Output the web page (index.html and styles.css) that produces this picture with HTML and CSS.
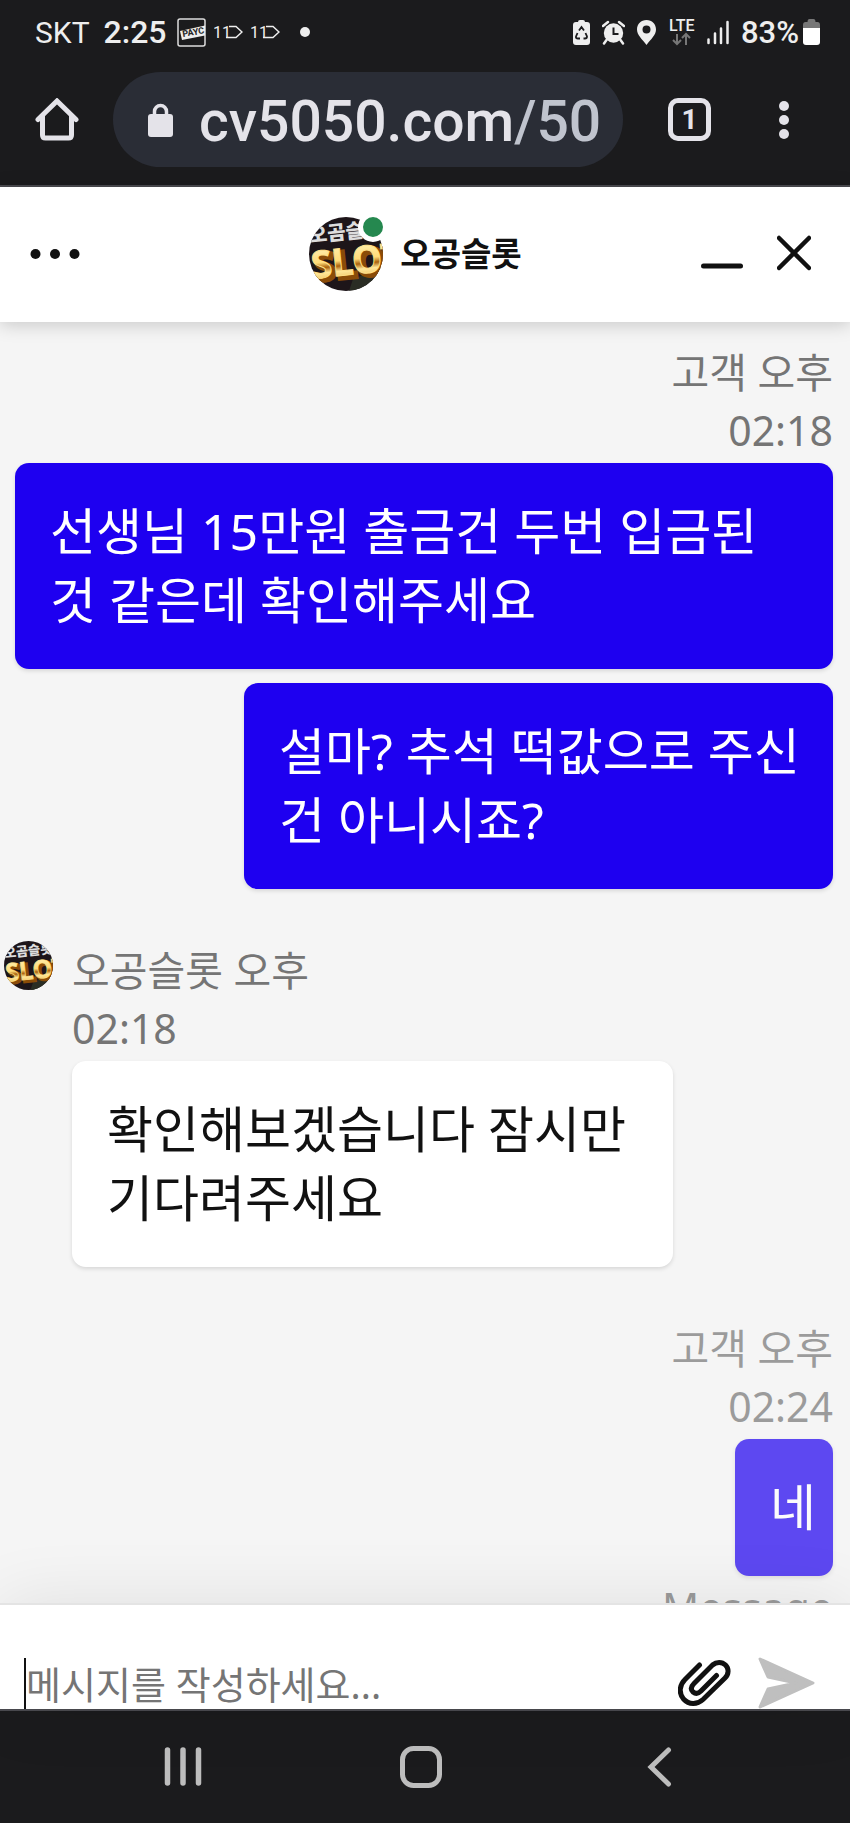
FILE: index.html
```html
<!DOCTYPE html>
<html lang="ko">
<head>
    <meta charset="UTF-8">
    <meta name="viewport" content="width=device-width, initial-scale=1.0">
    <title>오공슬롯</title>
    <link rel="stylesheet" href="styles.css">
</head>
<body>
    <!-- 아바타 로고 (헤더와 메시지에서 같이 사용) -->
    <svg class="defs" aria-hidden="true">
        <defs>
            <linearGradient id="gold" x1="0" y1="0" x2="0" y2="1">
                <stop offset="0.2" stop-color="#fff0b0"/>
                <stop offset="0.5" stop-color="#ffdc78"/>
                <stop offset="0.6" stop-color="#a8600c"/>
                <stop offset="0.7" stop-color="#ffe89a"/>
                <stop offset="1" stop-color="#e0a030"/>
            </linearGradient>
            <clipPath id="round"><circle cx="37" cy="37" r="37"/></clipPath>
            <symbol id="logo" viewBox="0 0 74 74">
                <g clip-path="url(#round)">
                    <rect width="74" height="74" fill="#1d1519"/>
                    <path d="M44 62l30-12v24H40z" fill="#2a2d24"/>
                    <g transform="rotate(-6 37 37)">
                        <text class="logo-top" x="2" y="22">오곰슬롯</text>
                        <text class="logo-shade" x="4" y="61">SLOT</text>
                        <text class="logo-slot" x="1" y="58">SLOT</text>
                    </g>
                </g>
            </symbol>
        </defs>
    </svg>

    <!-- 상태 표시줄 -->
    <div class="status-bar">
        <div class="status-left">
            <span class="carrier">SKT</span>
            <span class="clock">2:25</span>
            <svg width="29" height="29" viewBox="0 0 29 29">
                <rect x="1" y="1" width="27" height="27" rx="2" fill="none" stroke="#ddd" stroke-width="1.5"/>
                <path d="M3 13L28 7.500V17.500L5 22z" fill="#eee"/>
                <text class="payco" x="6" y="19" transform="rotate(-10 6 19)">PAYC</text>
            </svg>
            <svg width="29" height="20" viewBox="0 0 29 20">
                <text class="eleven" x="-1" y="16">11</text>
                <path d="M12 15.500H22L28 10L22 4.500H15" fill="none" stroke="#eee" stroke-width="1.500"/>
            </svg>
            <svg width="29" height="20" viewBox="0 0 29 20">
                <text class="eleven" x="-1" y="16">11</text>
                <path d="M12 15.500H22L28 10L22 4.500H15" fill="none" stroke="#eee" stroke-width="1.500"/>
            </svg>
            <span class="more-dot"></span>
        </div>
        <div class="status-right">
            <svg width="17" height="25" viewBox="0 0 17 25">
                <path d="M5 2q0-2 2-2h3q2 0 2 2h2q3 0 3 3v17q0 3-3 3H3q-3 0-3-3V5q0-3 3-3z" fill="#eee"/>
                <path d="M6 10.500L8.500 7l2.500 3.500M12.500 13l1.500 3.500q0 2-2 2h-1.500M7 18.500H5q-2.500 0-2-2L4.500 13" fill="none" stroke="#1b1b1d" stroke-width="1.800"/>
            </svg>
            <svg width="23" height="25" viewBox="0 0 23 25">
                <circle cx="11.500" cy="13" r="9.700" fill="#eee"/>
                <path d="M1 6l5-4M22 6l-5-4M4.500 20L2 23.500M18.500 20l2.500 3.500" stroke="#eee" stroke-width="2.500" stroke-linecap="round"/>
                <path d="M11.500 7.500V14h5" fill="none" stroke="#1b1b1d" stroke-width="2"/>
            </svg>
            <svg width="19" height="25" viewBox="0 0 19 25">
                <path d="M9.500 0C4 0 0 4 0 9.500C0 15 5 19 9.500 25C14 19 19 15 19 9.500C19 4 15 0 9.500 0zM9.500 5.500a4 4 0 1 1 0 8a4 4 0 1 1 0-8z" fill="#eee" fill-rule="evenodd"/>
            </svg>
            <svg class="lte-icon" width="30" height="28" viewBox="0 0 30 28">
                <text class="lte" x="1" y="13">LTE</text>
                <path d="M9 16v9.500M5 22l4 4l4-4M18 27V16.500M14 20l4-4l4 4" fill="none" stroke="#777" stroke-width="2"/>
            </svg>
            <svg width="22" height="25" viewBox="0 0 22 25">
                <path d="M1.500 19.500v3.500M8 13.500V23M14 8.500V23M20.500 2V23" stroke="#eee" stroke-width="2.500" stroke-linecap="round"/>
            </svg>
            <span class="percent">83%</span>
            <svg width="17" height="26" viewBox="0 0 17 26">
                <path d="M4.500 3q0-3 2-3h4q2 0 2 3h2q2.500 0 2.500 3v3H0V6q0-3 2.500-3z" fill="#777"/>
                <path d="M0 9h17v14q0 3-3 3H3q-3 0-3-3z" fill="#fff"/>
            </svg>
        </div>
    </div>

    <!-- 브라우저 주소창 -->
    <nav class="toolbar">
        <button class="icon-btn" aria-label="홈">
            <svg width="44" height="44" viewBox="0 0 44 44">
                <path d="M3 21.500L22 3L41 21.500M7.500 18V37q0 3 3 3h23q3 0 3-3V18" fill="none" stroke="#e4e3e9" stroke-width="5" stroke-linecap="round"/>
            </svg>
        </button>
        <a class="address" href="#">
            <svg width="25" height="34" viewBox="0 0 25 34">
                <path d="M6.500 13V8.500a6 6 0 0 1 12 0V13" fill="none" stroke="#e4e3e9" stroke-width="3.500"/>
                <rect y="11" width="25" height="23" rx="3" fill="#e4e3e9"/>
            </svg>
            <span class="url">cv5050.com<span class="path">/50</span></span>
        </a>
        <button class="tab-count">1</button>
        <button class="icon-btn" aria-label="메뉴">
            <svg width="10" height="40" viewBox="0 0 10 40">
                <circle cx="5" cy="6" r="5" fill="#e4e3e9"/>
                <circle cx="5" cy="20" r="5" fill="#e4e3e9"/>
                <circle cx="5" cy="34" r="5" fill="#e4e3e9"/>
            </svg>
        </button>
    </nav>

    <!-- 채팅 헤더 -->
    <header class="chat-header">
        <button class="icon-btn more" aria-label="더보기">
            <svg width="50" height="44" viewBox="0 0 50 44">
                <circle cx="5.500" cy="22" r="5" fill="#111"/>
                <circle cx="25" cy="22" r="5" fill="#111"/>
                <circle cx="44.500" cy="22" r="5" fill="#111"/>
            </svg>
        </button>
        <div class="agent">
            <div class="agent-avatar">
                <svg width="74" height="74"><use href="#logo"/></svg>
                <span class="online"></span>
            </div>
            <h1>오공슬롯</h1>
        </div>
        <div class="window-btns">
            <button class="icon-btn" aria-label="최소화">
                <svg width="42" height="44" viewBox="0 0 42 44">
                    <path d="M2.500 34h37" stroke="#111" stroke-width="5" stroke-linecap="round"/>
                </svg>
            </button>
            <button class="icon-btn" aria-label="닫기">
                <svg width="34" height="44" viewBox="0 0 34 44">
                    <path d="M2 6l30 30M32 6L2 36" stroke="#111" stroke-width="4.500" stroke-linecap="round"/>
                </svg>
            </button>
        </div>
    </header>

    <!-- 대화 내용 -->
    <main class="log">
        <section class="group mine">
            <p class="meta">고객 오후<br>02:18</p>
            <p class="bubble">선생님 15만원 출금건 두번 입금된 것 같은데 확인해주세요</p>
            <p class="bubble narrow">설마? 추석 떡값으로 주신 건 아니시죠?</p>
        </section>

        <section class="group theirs">
            <svg class="avatar" width="49" height="49"><use href="#logo"/></svg>
            <div class="thread">
                <p class="meta">오공슬롯 오후<br>02:18</p>
                <p class="bubble">확인해보겠습니다 잠시만 기다려주세요</p>
            </div>
        </section>

        <section class="group mine sending">
            <p class="meta">고객 오후<br>02:24</p>
            <p class="bubble short">네</p>
            <p class="meta">Message</p>
        </section>
    </main>

    <!-- 입력창 -->
    <form class="composer">
        <input type="text" placeholder="메시지를 작성하세요..." aria-label="메시지">
        <button class="icon-btn" type="button" aria-label="파일 첨부">
            <svg width="54" height="50" viewBox="0 0 54 50">
                <path d="M21.500 6L7 20.500C1.500 26 .5 34 5.500 40C11 46 19 46 25 40.500L47 19C51 15 51 9.500 47.500 6C44 2.500 38.500 2.500 34.500 6L16 24.500C12.500 28 13 31 15 33C17.500 35 20.500 34.500 23 32L38.500 16.500" fill="none" stroke="#111" stroke-width="5" stroke-linecap="round"/>
            </svg>
        </button>
        <button class="icon-btn" type="button" aria-label="보내기">
            <svg width="58" height="52" viewBox="0 0 58 52">
                <path d="M2 2L55 26L2 50L10 32L38 26L10 20z" fill="#bfbfbf" stroke="#bfbfbf" stroke-width="3" stroke-linejoin="round"/>
            </svg>
        </button>
    </form>

    <!-- 하단 내비게이션 -->
    <nav class="nav-bar">
        <button class="icon-btn" aria-label="최근 앱">
            <svg width="42" height="42" viewBox="0 0 42 42">
                <path d="M5.500 4v33M21 4v33M36.500 4v33" stroke="#bdbdbd" stroke-width="5.500" stroke-linecap="round"/>
            </svg>
        </button>
        <button class="icon-btn" aria-label="홈 화면">
            <svg width="42" height="42" viewBox="0 0 42 42">
                <rect x="2.500" y="2.500" width="37" height="37" rx="11" fill="none" stroke="#bdbdbd" stroke-width="5"/>
            </svg>
        </button>
        <button class="icon-btn" aria-label="뒤로">
            <svg width="42" height="42" viewBox="0 0 42 42">
                <path d="M30.500 4L13 21L30.500 38" fill="none" stroke="#bdbdbd" stroke-width="5" stroke-linecap="round"/>
            </svg>
        </button>
    </nav>
</body>
</html>
```
FILE: styles.css
```css
:root {
    --font-main: "Noto Sans", "Noto Sans CJK KR", sans-serif;
    --font-ui: Roboto, sans-serif;
    --color-chrome: #1b1b1d;
    --color-chrome-line: #4b4b50;
    --color-light: #e4e3e9;
    --color-bubble: #1e00f0;
    --color-muted: #757575;
    --color-bg: #f5f5f5;
}

* { box-sizing: border-box; }

body {
    display: flex;
    flex-direction: column;
    height: 100vh;
    margin: 0;
    overflow: hidden;
    background: var(--color-bg);
    font-family: var(--font-main);
}

svg { display: block; flex: none; }

.defs { position: absolute; width: 0; height: 0; }

.icon-btn {
    padding: 0;
    border: 0;
    background: none;
    cursor: pointer;
}

/* 로고 */
.logo-top {
    font: 900 20px "Noto Sans CJK KR", sans-serif;
    fill: #ddd;
}

.logo-slot, .logo-shade { font: 700 38px "Noto Sans", sans-serif; }
.logo-slot { fill: url(#gold); stroke: #ffe08a; stroke-width: 1px; }
.logo-shade { fill: #8a4c08; stroke: #8a4c08; stroke-width: 4px; }

/* 상태 표시줄 */
.status-bar {
    display: flex;
    flex: none;
    justify-content: space-between;
    height: 64px;
    padding: 0 30px 0 35px;
    background: var(--color-chrome);
    color: #eee;
    font-family: var(--font-ui);
}

.status-left, .status-right { display: flex; align-items: center; }
.status-left { gap: 8px; }
.status-right { gap: 12px; }
.carrier { font-size: 30px; }
.clock { padding: 0 2px 0 6px; font-size: 32px; font-weight: 500; }
.percent { margin-right: -8px; font-size: 31px; font-weight: 500; }
.payco { font: 700 9px var(--font-ui); fill: #222; }
.eleven { font: 400 16px var(--font-ui); fill: #eee; }
.lte { font: 500 16px var(--font-ui); fill: #eee; }
.lte-icon { margin-right: -3px; }

.more-dot {
    width: 10px;
    height: 10px;
    margin-left: 12px;
    border-radius: 50%;
    background: #eee;
}

/* 주소창 */
.toolbar {
    display: flex;
    flex: none;
    align-items: center;
    height: 123px;
    padding: 0 61px 10px 35px;
    border-bottom: 2px solid var(--color-chrome-line);
    background: var(--color-chrome);
    font-family: var(--font-ui);
}

.address {
    display: flex;
    flex: 1;
    align-items: center;
    gap: 26px;
    height: 95px;
    margin: 0 45px 0 34px;
    padding-left: 35px;
    border-radius: 48px;
    background: #2a2d36;
    color: var(--color-light);
    font-size: 57px;
    font-weight: 500;
    text-decoration: none;
    white-space: nowrap;
}

.address .url { padding-top: 3px; }
.address .path { color: #c0c4ce; }

.tab-count {
    width: 43px;
    height: 43px;
    margin-right: 68px;
    padding: 0;
    border: 5px solid var(--color-light);
    border-radius: 10px;
    background: none;
    color: var(--color-light);
    font: 700 28px var(--font-ui);
    line-height: 32px;
}

/* 채팅 헤더 */
.chat-header {
    position: relative;
    z-index: 1;
    display: grid;
    flex: none;
    grid-template-columns: 1fr auto 1fr;
    align-items: center;
    height: 135px;
    padding: 0 39px 2px 20px;
    background: #fff;
    box-shadow: 0 2px 18px rgba(0, 0, 0, 0.2);
}

.more { justify-self: start; padding-left: 10px; }
.agent { display: flex; align-items: center; gap: 17px; }
.agent-avatar { position: relative; }

.agent h1 {
    margin: 0;
    color: #111;
    font-size: 33px;
    font-weight: 700;
    line-height: 48px;
}

.online {
    position: absolute;
    top: -5px;
    right: -5px;
    width: 30px;
    height: 30px;
    border: 5px solid #fff;
    border-radius: 50%;
    background: #25884f;
}

.window-btns { display: flex; justify-content: flex-end; gap: 34px; }

/* 대화 */
.log {
    display: flex;
    flex: 1;
    flex-direction: column;
    gap: 52px;
    min-height: 0;
    padding: 21px 17px 0 15px;
    overflow: hidden;
}

.group { flex: none; }
.mine, .thread { display: flex; flex-direction: column; }
.mine { align-items: flex-end; }
.mine .meta { text-align: right; }

.meta {
    margin: 0 0 4px;
    color: var(--color-muted);
    font-size: 41px;
    line-height: 58px;
}

.bubble {
    margin: 0;
    padding: 34px 30px 34px 35px;
    border-radius: 14px;
    font-size: 50px;
    line-height: 69px;
    word-break: keep-all;
    box-shadow: 0 2px 4px rgba(0, 0, 0, 0.12);
}

.bubble + .bubble { margin-top: 14px; }
.mine .bubble { background: var(--color-bubble); color: #fff; }
.mine .narrow { max-width: 72%; }
.mine .short { padding-right: 17px; }

.theirs {
    display: flex;
    align-items: flex-start;
    gap: 19px;
    margin-left: -11px;
}

.thread { flex: 1; align-items: flex-start; }
.theirs .bubble { max-width: 79%; background: #fff; color: #111; }

.sending { opacity: 0.7; }
.sending .bubble { margin-bottom: 2px; }

/* 입력창 */
.composer {
    position: relative;
    z-index: 1;
    display: flex;
    flex: none;
    align-items: flex-end;
    height: 106px;
    padding: 0 34px 0 24px;
    border-top: 2px solid #e4e4e4;
    background: #fff;
    box-shadow: 0 0 70px rgba(0, 0, 0, 0.09);
}

.composer input {
    flex: 1;
    min-width: 0;
    height: 51px;
    margin-right: 24px;
    padding: 0;
    border: 0;
    border-left: 2px solid #111;
    outline: 0;
    background: none;
    font-family: var(--font-main);
    font-size: 38px;
}

.composer input::placeholder { color: var(--color-muted); opacity: 1; }
.composer .icon-btn + .icon-btn { margin-left: 26px; }

/* 하단 내비게이션 */
.nav-bar {
    display: flex;
    flex: none;
    align-items: center;
    justify-content: space-between;
    height: 114px;
    padding: 0 20% 0 19%;
    border-top: 2px solid var(--color-chrome-line);
    background: var(--color-chrome);
}
```
